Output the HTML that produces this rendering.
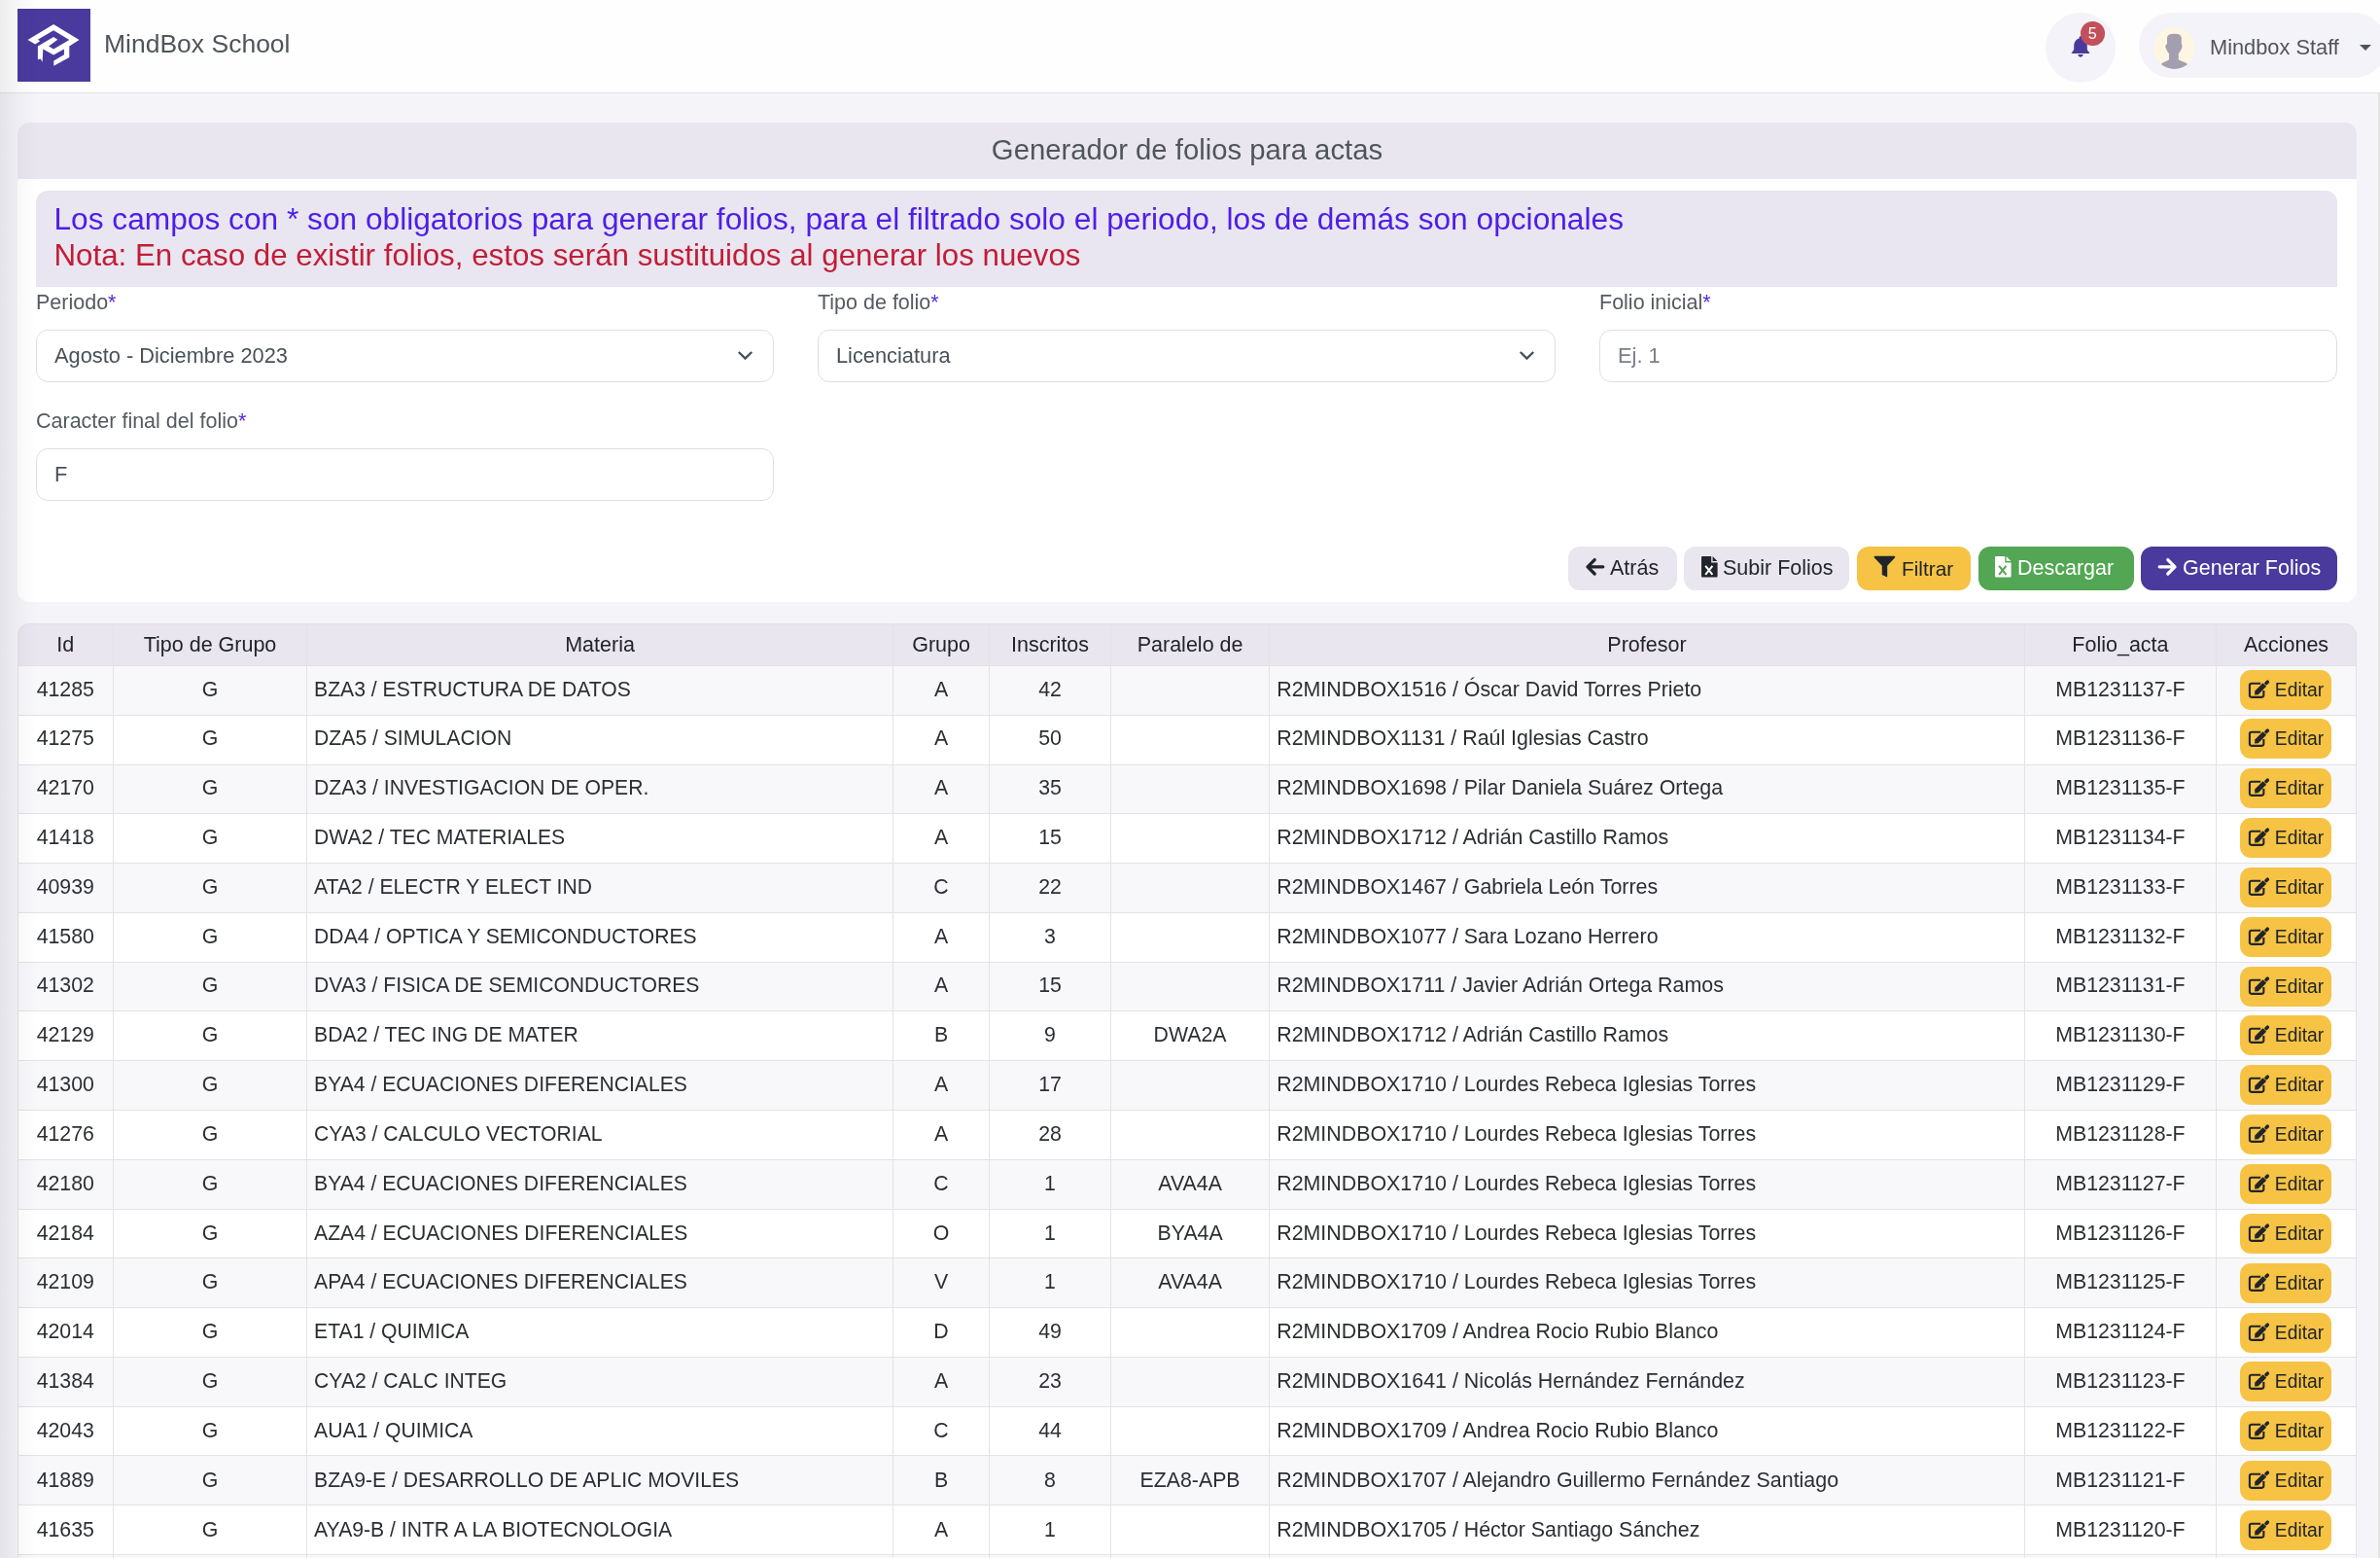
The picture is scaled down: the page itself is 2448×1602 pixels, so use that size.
<!DOCTYPE html>
<html><head><meta charset="utf-8">
<style>
*{box-sizing:border-box;margin:0;padding:0}
html,body{width:2448px;height:1602px;overflow:hidden}
body{will-change:transform;background:#f5f4f9;font-family:"Liberation Sans",sans-serif;color:#212529;position:relative}
.abs{position:absolute}
#hdr{left:0;top:0;width:2448px;height:96px;background:#fefefe;border-bottom:1.7px solid #e2e2e2}
#brand{left:107px;top:27px;font-size:26.5px;color:#50555b;white-space:nowrap;line-height:36px}
#bellc{left:2104px;top:13px;width:72px;height:72px;border-radius:50%;background:#f4f3f9}
#badge{left:2140px;top:22px;width:24.5px;height:24.5px;border-radius:50%;background:#c1505b;color:#fff;font-size:16px;text-align:center;line-height:26px}
#pill{left:2200px;top:13px;width:255px;height:67px;border-radius:34px;background:#f4f3f9}
#uname{left:2273px;top:34px;font-size:21.8px;color:#50555b;white-space:nowrap;line-height:30px}
#card{left:18px;top:126px;width:2406px;height:493px;background:#fff;border-radius:12px;overflow:hidden}
#cardh{left:0;top:0;width:2406px;height:58px;background:#e9e6f0;text-align:center;font-size:29.3px;color:#50555b;line-height:56px}
#alert{left:19px;top:70px;width:2367px;height:99px;background:#e9e6f1;border-radius:12px 12px 0 0}
.al1{position:absolute;left:18.5px;top:9px;font-size:31.68px;color:#4f1ee6;white-space:nowrap;line-height:40px}
.al2{position:absolute;left:18.5px;top:47px;font-size:31.3px;color:#c21d35;white-space:nowrap;line-height:40px}
.lbl{position:absolute;font-size:21.5px;color:#555a61;white-space:nowrap;line-height:28px;margin-top:1px}
.lbl i{font-style:normal;color:#5627e0}
.inp{position:absolute;width:759px;height:54px;border:1.5px solid #dfdfe1;border-radius:12px;background:#fff;font-size:21.8px;color:#495057;line-height:51px;padding-left:18px;white-space:nowrap}
.inp svg{position:absolute;right:20px;top:20px}
.btn{position:absolute;top:562px;height:45px;border-radius:12px;font-size:21.5px;line-height:45px;white-space:nowrap;color:#212529}
.btn span{position:absolute;top:0}
.btn svg{position:absolute;left:0;top:0}
#tw{left:18px;top:641px;width:2406px;height:961px;background:#fff;border-radius:12px 12px 0 0;overflow:hidden}
#tbord{left:18px;top:641px;width:2406px;height:1000px;border:1.5px solid #e3e3e3;border-radius:12px 12px 0 0}
.th{position:absolute;background:#e9e6f0;font-size:21.5px;text-align:center;color:#212529;white-space:nowrap}
.row{position:absolute;left:0px;width:2406px;border-top:1.5px solid #e3e3e3;background:#fff}
.row.odd{background:#f8f8fb}
.td{position:absolute;height:50.8px;font-size:21.3px;line-height:50.8px;white-space:nowrap;color:#2b2e33}
.c{text-align:center}
.vl{position:absolute;width:1.5px;height:1000px;background:#e3e3e3}
.ed{position:absolute;width:94px;height:41px;border-radius:11px;background:#f6c344;font-size:19.3px;color:#212529}
.ed span{position:absolute;left:35.8px;top:1px;line-height:40px}
#lshadow{left:0;top:0;width:40px;height:1602px;background:linear-gradient(to right,rgba(30,30,50,0.075) 0px,rgba(30,30,50,0.03) 18px,rgba(30,30,50,0) 38px)}
#rline{left:2446px;top:96px;width:2px;height:1506px;background:#e6e6e6}
#tblmask{left:18px;top:641px;width:2406px;height:14px}
</style></head><body>
<div id="hdr" class="abs"></div>
<svg class="abs" style="left:18px;top:9px" width="75" height="75" viewBox="18 9 75 75">
<rect x="18" y="9" width="75" height="75" fill="#4a3a9d"/>
<path fill="#fff" d="M55.1,25 L81.5,41 L71.3,47.4 L71.3,58.9 L55.3,67.8 L55.3,62.4 L65.9,56.2 L65.9,50.5 L55.1,56.6 L44.3,50.5 L43.6,63.8 L41.6,60.5 L38.9,61.2 L38.9,47.4 L55.1,37.9 L59.3,40.8 L50.1,47.4 L55.1,50.5 L71.3,41 L55.1,31.2 L38.9,40.8 L41.2,42.2 L36.2,45.6 L28.5,41 Z"/>
</svg>
<div id="brand" class="abs">MindBox School</div>
<div id="bellc" class="abs"></div>
<svg class="abs" style="left:2125px;top:33px" width="30" height="30" viewBox="2125 33 30 30">
<path fill="#4a3a9d" d="M2140,37.2 c-0.9,0 -1.4,0.7 -1.4,1.5 v0.8 c-3.6,0.9 -5.4,4.2 -5.4,8 v2.6 c0,1.8 -1.2,3 -2.3,4 c-0.4,0.4 -0.2,0.8 0.3,0.8 h17.6 c0.5,0 0.7,-0.4 0.3,-0.8 c-1.1,-1 -2.3,-2.2 -2.3,-4 v-2.6 c0,-3.8 -1.8,-7.1 -5.4,-8 v-0.8 c0,-0.8 -0.5,-1.5 -1.4,-1.5z M2137.2,56 h5.6 c-0.6,1.7 -1.6,2.7 -2.8,2.7 c-1.2,0 -2.2,-1 -2.8,-2.7z"/>
</svg>
<div id="badge" class="abs">5</div>
<div id="pill" class="abs"></div>
<svg class="abs" style="left:2215px;top:28px" width="43" height="43" viewBox="0 0 43 43">
<defs><clipPath id="avc"><circle cx="21.5" cy="21.5" r="21.5"/></clipPath></defs>
<circle cx="21.5" cy="21.5" r="21.5" fill="#fdf6e3"/>
<g clip-path="url(#avc)" fill="#a39fb0">
<path d="M14,11.5 c0,-3.5 2.8,-4.7 7.4,-4.7 c4.6,0 7.4,1.2 7.4,4.7 v5.7 c0.9,0.4 1,3.8 0,4.9 c-0.6,1.8 -1.8,3.6 -3,5.2 v6.1 l8.4,3.6 L38,45 H5 L8.6,37 l7.4,-3.6 v-6.1 c-1.2,-1.6 -2.4,-3.4 -3,-5.2 c-1,-1.1 -0.9,-4.5 1,-4.9z"/>
</g>
</svg>
<div id="uname" class="abs">Mindbox Staff</div>
<svg class="abs" style="left:2425px;top:44px" width="16" height="10" viewBox="0 0 16 10"><path d="M2,2 h12 l-6,6z" fill="#50555b"/></svg>

<div id="card" class="abs">
  <div id="cardh" class="abs">Generador de folios para actas</div>
  <div id="alert" class="abs">
    <div class="al1">Los campos con * son obligatorios para generar folios, para el filtrado solo el periodo, los de demás son opcionales</div>
    <div class="al2">Nota: En caso de existir folios, estos serán sustituidos al generar los nuevos</div>
  </div>
</div>

<div class="lbl" style="left:37px;top:296px">Periodo<i>*</i></div>
<div class="lbl" style="left:841px;top:296px">Tipo de folio<i>*</i></div>
<div class="lbl" style="left:1645px;top:296px">Folio inicial<i>*</i></div>
<div class="lbl" style="left:37px;top:418px">Caracter final del folio<i>*</i></div>

<div class="inp" style="left:37px;top:339px">Agosto - Diciembre 2023<svg width="17" height="11" viewBox="0 0 17 11"><path d="M1.8,2 L8.5,8.6 L15.2,2" fill="none" stroke="#495057" stroke-width="2.4"/></svg></div>
<div class="inp" style="left:841px;top:339px">Licenciatura<svg width="17" height="11" viewBox="0 0 17 11"><path d="M1.8,2 L8.5,8.6 L15.2,2" fill="none" stroke="#495057" stroke-width="2.4"/></svg></div>
<div class="inp" style="left:1645px;top:339px;color:#7a7f86">Ej. 1</div>
<div class="inp" style="left:37px;top:461px">F</div>

<!-- buttons -->
<div class="btn" style="left:1613px;width:112px;background:#e9e6f0">
<svg width="112" height="45" viewBox="1613 562 112 45"><path d="M1648.8,582.8 H1634 M1640.2,575.6 L1633,582.8 L1640.2,590" fill="none" stroke="#212529" stroke-width="3.3" stroke-linecap="round" stroke-linejoin="round"/></svg>
<span style="left:43px">Atrás</span></div>
<div class="btn" style="left:1732px;width:170px;background:#e9e6f0">
<svg width="170" height="45" viewBox="1732 562 170 45"><path d="M1751,572.1 H1760.2 V578.6 H1766.6 V592.6 a1,1 0 0 1 -1,1 H1751 a1,1 0 0 1 -1,-1 V573.1 a1,1 0 0 1 1,-1z M1761.6,572.1 L1766.4,577.1 H1761.6z" fill="#212529"/><path d="M1754.2,581.8 L1761.4,590.9 M1761.4,581.8 L1754.2,590.9" stroke="#fff" stroke-width="2"/></svg>
<span style="left:40px">Subir Folios</span></div>
<div class="btn" style="left:1910px;width:117px;background:#f6c344">
<svg width="117" height="45" viewBox="1910 562 117 45"><path d="M1928.6,571.7 H1948.3 a1,1 0 0 1 0.7,1.7 L1941.2,581.8 V593.6 L1935.8,590.9 V581.8 L1927.9,573.4 a1,1 0 0 1 0.7,-1.7z" fill="#212529"/></svg>
<span style="left:46px;font-size:20.8px">Filtrar</span></div>
<div class="btn" style="left:2035px;width:160px;background:#53a653;color:#fff">
<svg width="160" height="45" viewBox="2035 562 160 45"><path d="M2053,572.1 H2062.2 V578.6 H2068.6 V592.6 a1,1 0 0 1 -1,1 H2053 a1,1 0 0 1 -1,-1 V573.1 a1,1 0 0 1 1,-1z M2063.6,572.1 L2068.4,577.1 H2063.6z" fill="#fff"/><path d="M2056.2,581.8 L2063.4,590.9 M2063.4,581.8 L2056.2,590.9" stroke="#53a653" stroke-width="2"/></svg>
<span style="left:40px">Descargar</span></div>
<div class="btn" style="left:2202px;width:202px;background:#4a3a9d;color:#fff">
<svg width="202" height="45" viewBox="2202 562 202 45"><path d="M2221.2,582.8 H2236 M2229.8,575.6 L2237,582.8 L2229.8,590" fill="none" stroke="#fff" stroke-width="3.3" stroke-linecap="round" stroke-linejoin="round"/></svg>
<span style="left:43px">Generar Folios</span></div>

<div id="tw" class="abs">
<div class="th" style="left:0.00px;width:98.50px;top:0px;height:43.00px;line-height:44.00px">Id</div>
<div class="th" style="left:98.50px;width:199.00px;top:0px;height:43.00px;line-height:44.00px">Tipo de Grupo</div>
<div class="th" style="left:297.50px;width:603.10px;top:0px;height:43.00px;line-height:44.00px">Materia</div>
<div class="th" style="left:900.60px;width:98.90px;top:0px;height:43.00px;line-height:44.00px">Grupo</div>
<div class="th" style="left:999.50px;width:125.10px;top:0px;height:43.00px;line-height:44.00px">Inscritos</div>
<div class="th" style="left:1124.60px;width:163.00px;top:0px;height:43.00px;line-height:44.00px">Paralelo de</div>
<div class="th" style="left:1287.60px;width:776.80px;top:0px;height:43.00px;line-height:44.00px">Profesor</div>
<div class="th" style="left:2064.40px;width:197.10px;top:0px;height:43.00px;line-height:44.00px">Folio_acta</div>
<div class="th" style="left:2261.50px;width:144.00px;top:0px;height:43.00px;line-height:44.00px">Acciones</div>
<div class="row odd" style="top:43.00px;height:52.28px"></div>
<div class="td c" style="left:0.00px;width:98.50px;top:42.50px">41285</div>
<div class="td c" style="left:98.50px;width:199.00px;top:42.50px">G</div>
<div class="td" style="left:305.10px;top:42.50px;font-size:21.15px">BZA3 / ESTRUCTURA DE DATOS</div>
<div class="td c" style="left:900.60px;width:98.90px;top:42.50px">A</div>
<div class="td c" style="left:999.50px;width:125.10px;top:42.50px">42</div>
<div class="td c" style="left:1124.60px;width:163.00px;top:42.50px"></div>
<div class="td" style="left:1295.20px;top:42.50px;font-size:21.4px">R2MINDBOX1516 / Óscar David Torres Prieto</div>
<div class="td c" style="left:2064.40px;width:197.10px;top:42.50px">MB1231137-F</div>
<div class="ed" style="left:2286px;top:47.60px"><svg width="94" height="41" viewBox="0 0 94 41" style="position:absolute;left:0;top:0"><path d="M21.2,13.75 H11.9 a2,2 0 0 0 -2,2 V25.85 a2,2 0 0 0 2,2 H22.35 a2,2 0 0 0 2,-2 V21.1" fill="none" stroke="#212529" stroke-width="2.1"/><path d="M15.1,25.4 L15.3,21.6 L23.6,13.3 L27.1,16.8 L18.8,25.2 Z" fill="#212529"/><path d="M27,13.5 L28.3,12.2" stroke="#212529" stroke-width="3.6" stroke-linecap="round"/></svg><span>Editar</span></div>
<div class="row" style="top:93.78px;height:52.28px"></div>
<div class="td c" style="left:0.00px;width:98.50px;top:93.33px">41275</div>
<div class="td c" style="left:98.50px;width:199.00px;top:93.33px">G</div>
<div class="td" style="left:305.10px;top:93.33px;font-size:21.15px">DZA5 / SIMULACION</div>
<div class="td c" style="left:900.60px;width:98.90px;top:93.33px">A</div>
<div class="td c" style="left:999.50px;width:125.10px;top:93.33px">50</div>
<div class="td c" style="left:1124.60px;width:163.00px;top:93.33px"></div>
<div class="td" style="left:1295.20px;top:93.33px;font-size:21.4px">R2MINDBOX1131 / Raúl Iglesias Castro</div>
<div class="td c" style="left:2064.40px;width:197.10px;top:93.33px">MB1231136-F</div>
<div class="ed" style="left:2286px;top:98.44px"><svg width="94" height="41" viewBox="0 0 94 41" style="position:absolute;left:0;top:0"><path d="M21.2,13.75 H11.9 a2,2 0 0 0 -2,2 V25.85 a2,2 0 0 0 2,2 H22.35 a2,2 0 0 0 2,-2 V21.1" fill="none" stroke="#212529" stroke-width="2.1"/><path d="M15.1,25.4 L15.3,21.6 L23.6,13.3 L27.1,16.8 L18.8,25.2 Z" fill="#212529"/><path d="M27,13.5 L28.3,12.2" stroke="#212529" stroke-width="3.6" stroke-linecap="round"/></svg><span>Editar</span></div>
<div class="row odd" style="top:144.56px;height:52.28px"></div>
<div class="td c" style="left:0.00px;width:98.50px;top:144.16px">42170</div>
<div class="td c" style="left:98.50px;width:199.00px;top:144.16px">G</div>
<div class="td" style="left:305.10px;top:144.16px;font-size:21.15px">DZA3 / INVESTIGACION DE OPER.</div>
<div class="td c" style="left:900.60px;width:98.90px;top:144.16px">A</div>
<div class="td c" style="left:999.50px;width:125.10px;top:144.16px">35</div>
<div class="td c" style="left:1124.60px;width:163.00px;top:144.16px"></div>
<div class="td" style="left:1295.20px;top:144.16px;font-size:21.4px">R2MINDBOX1698 / Pilar Daniela Suárez Ortega</div>
<div class="td c" style="left:2064.40px;width:197.10px;top:144.16px">MB1231135-F</div>
<div class="ed" style="left:2286px;top:149.28px"><svg width="94" height="41" viewBox="0 0 94 41" style="position:absolute;left:0;top:0"><path d="M21.2,13.75 H11.9 a2,2 0 0 0 -2,2 V25.85 a2,2 0 0 0 2,2 H22.35 a2,2 0 0 0 2,-2 V21.1" fill="none" stroke="#212529" stroke-width="2.1"/><path d="M15.1,25.4 L15.3,21.6 L23.6,13.3 L27.1,16.8 L18.8,25.2 Z" fill="#212529"/><path d="M27,13.5 L28.3,12.2" stroke="#212529" stroke-width="3.6" stroke-linecap="round"/></svg><span>Editar</span></div>
<div class="row" style="top:195.34px;height:52.28px"></div>
<div class="td c" style="left:0.00px;width:98.50px;top:194.99px">41418</div>
<div class="td c" style="left:98.50px;width:199.00px;top:194.99px">G</div>
<div class="td" style="left:305.10px;top:194.99px;font-size:21.15px">DWA2 / TEC MATERIALES</div>
<div class="td c" style="left:900.60px;width:98.90px;top:194.99px">A</div>
<div class="td c" style="left:999.50px;width:125.10px;top:194.99px">15</div>
<div class="td c" style="left:1124.60px;width:163.00px;top:194.99px"></div>
<div class="td" style="left:1295.20px;top:194.99px;font-size:21.4px">R2MINDBOX1712 / Adrián Castillo Ramos</div>
<div class="td c" style="left:2064.40px;width:197.10px;top:194.99px">MB1231134-F</div>
<div class="ed" style="left:2286px;top:200.12px"><svg width="94" height="41" viewBox="0 0 94 41" style="position:absolute;left:0;top:0"><path d="M21.2,13.75 H11.9 a2,2 0 0 0 -2,2 V25.85 a2,2 0 0 0 2,2 H22.35 a2,2 0 0 0 2,-2 V21.1" fill="none" stroke="#212529" stroke-width="2.1"/><path d="M15.1,25.4 L15.3,21.6 L23.6,13.3 L27.1,16.8 L18.8,25.2 Z" fill="#212529"/><path d="M27,13.5 L28.3,12.2" stroke="#212529" stroke-width="3.6" stroke-linecap="round"/></svg><span>Editar</span></div>
<div class="row odd" style="top:246.12px;height:52.28px"></div>
<div class="td c" style="left:0.00px;width:98.50px;top:245.82px">40939</div>
<div class="td c" style="left:98.50px;width:199.00px;top:245.82px">G</div>
<div class="td" style="left:305.10px;top:245.82px;font-size:21.15px">ATA2 / ELECTR Y ELECT IND</div>
<div class="td c" style="left:900.60px;width:98.90px;top:245.82px">C</div>
<div class="td c" style="left:999.50px;width:125.10px;top:245.82px">22</div>
<div class="td c" style="left:1124.60px;width:163.00px;top:245.82px"></div>
<div class="td" style="left:1295.20px;top:245.82px;font-size:21.4px">R2MINDBOX1467 / Gabriela León Torres</div>
<div class="td c" style="left:2064.40px;width:197.10px;top:245.82px">MB1231133-F</div>
<div class="ed" style="left:2286px;top:250.96px"><svg width="94" height="41" viewBox="0 0 94 41" style="position:absolute;left:0;top:0"><path d="M21.2,13.75 H11.9 a2,2 0 0 0 -2,2 V25.85 a2,2 0 0 0 2,2 H22.35 a2,2 0 0 0 2,-2 V21.1" fill="none" stroke="#212529" stroke-width="2.1"/><path d="M15.1,25.4 L15.3,21.6 L23.6,13.3 L27.1,16.8 L18.8,25.2 Z" fill="#212529"/><path d="M27,13.5 L28.3,12.2" stroke="#212529" stroke-width="3.6" stroke-linecap="round"/></svg><span>Editar</span></div>
<div class="row" style="top:296.90px;height:52.28px"></div>
<div class="td c" style="left:0.00px;width:98.50px;top:296.65px">41580</div>
<div class="td c" style="left:98.50px;width:199.00px;top:296.65px">G</div>
<div class="td" style="left:305.10px;top:296.65px;font-size:21.15px">DDA4 / OPTICA Y SEMICONDUCTORES</div>
<div class="td c" style="left:900.60px;width:98.90px;top:296.65px">A</div>
<div class="td c" style="left:999.50px;width:125.10px;top:296.65px">3</div>
<div class="td c" style="left:1124.60px;width:163.00px;top:296.65px"></div>
<div class="td" style="left:1295.20px;top:296.65px;font-size:21.4px">R2MINDBOX1077 / Sara Lozano Herrero</div>
<div class="td c" style="left:2064.40px;width:197.10px;top:296.65px">MB1231132-F</div>
<div class="ed" style="left:2286px;top:301.80px"><svg width="94" height="41" viewBox="0 0 94 41" style="position:absolute;left:0;top:0"><path d="M21.2,13.75 H11.9 a2,2 0 0 0 -2,2 V25.85 a2,2 0 0 0 2,2 H22.35 a2,2 0 0 0 2,-2 V21.1" fill="none" stroke="#212529" stroke-width="2.1"/><path d="M15.1,25.4 L15.3,21.6 L23.6,13.3 L27.1,16.8 L18.8,25.2 Z" fill="#212529"/><path d="M27,13.5 L28.3,12.2" stroke="#212529" stroke-width="3.6" stroke-linecap="round"/></svg><span>Editar</span></div>
<div class="row odd" style="top:347.68px;height:52.28px"></div>
<div class="td c" style="left:0.00px;width:98.50px;top:347.48px">41302</div>
<div class="td c" style="left:98.50px;width:199.00px;top:347.48px">G</div>
<div class="td" style="left:305.10px;top:347.48px;font-size:21.15px">DVA3 / FISICA DE SEMICONDUCTORES</div>
<div class="td c" style="left:900.60px;width:98.90px;top:347.48px">A</div>
<div class="td c" style="left:999.50px;width:125.10px;top:347.48px">15</div>
<div class="td c" style="left:1124.60px;width:163.00px;top:347.48px"></div>
<div class="td" style="left:1295.20px;top:347.48px;font-size:21.4px">R2MINDBOX1711 / Javier Adrián Ortega Ramos</div>
<div class="td c" style="left:2064.40px;width:197.10px;top:347.48px">MB1231131-F</div>
<div class="ed" style="left:2286px;top:352.64px"><svg width="94" height="41" viewBox="0 0 94 41" style="position:absolute;left:0;top:0"><path d="M21.2,13.75 H11.9 a2,2 0 0 0 -2,2 V25.85 a2,2 0 0 0 2,2 H22.35 a2,2 0 0 0 2,-2 V21.1" fill="none" stroke="#212529" stroke-width="2.1"/><path d="M15.1,25.4 L15.3,21.6 L23.6,13.3 L27.1,16.8 L18.8,25.2 Z" fill="#212529"/><path d="M27,13.5 L28.3,12.2" stroke="#212529" stroke-width="3.6" stroke-linecap="round"/></svg><span>Editar</span></div>
<div class="row" style="top:398.46px;height:52.28px"></div>
<div class="td c" style="left:0.00px;width:98.50px;top:398.31px">42129</div>
<div class="td c" style="left:98.50px;width:199.00px;top:398.31px">G</div>
<div class="td" style="left:305.10px;top:398.31px;font-size:21.15px">BDA2 / TEC ING DE MATER</div>
<div class="td c" style="left:900.60px;width:98.90px;top:398.31px">B</div>
<div class="td c" style="left:999.50px;width:125.10px;top:398.31px">9</div>
<div class="td c" style="left:1124.60px;width:163.00px;top:398.31px">DWA2A</div>
<div class="td" style="left:1295.20px;top:398.31px;font-size:21.4px">R2MINDBOX1712 / Adrián Castillo Ramos</div>
<div class="td c" style="left:2064.40px;width:197.10px;top:398.31px">MB1231130-F</div>
<div class="ed" style="left:2286px;top:403.48px"><svg width="94" height="41" viewBox="0 0 94 41" style="position:absolute;left:0;top:0"><path d="M21.2,13.75 H11.9 a2,2 0 0 0 -2,2 V25.85 a2,2 0 0 0 2,2 H22.35 a2,2 0 0 0 2,-2 V21.1" fill="none" stroke="#212529" stroke-width="2.1"/><path d="M15.1,25.4 L15.3,21.6 L23.6,13.3 L27.1,16.8 L18.8,25.2 Z" fill="#212529"/><path d="M27,13.5 L28.3,12.2" stroke="#212529" stroke-width="3.6" stroke-linecap="round"/></svg><span>Editar</span></div>
<div class="row odd" style="top:449.24px;height:52.28px"></div>
<div class="td c" style="left:0.00px;width:98.50px;top:449.14px">41300</div>
<div class="td c" style="left:98.50px;width:199.00px;top:449.14px">G</div>
<div class="td" style="left:305.10px;top:449.14px;font-size:21.15px">BYA4 / ECUACIONES DIFERENCIALES</div>
<div class="td c" style="left:900.60px;width:98.90px;top:449.14px">A</div>
<div class="td c" style="left:999.50px;width:125.10px;top:449.14px">17</div>
<div class="td c" style="left:1124.60px;width:163.00px;top:449.14px"></div>
<div class="td" style="left:1295.20px;top:449.14px;font-size:21.4px">R2MINDBOX1710 / Lourdes Rebeca Iglesias Torres</div>
<div class="td c" style="left:2064.40px;width:197.10px;top:449.14px">MB1231129-F</div>
<div class="ed" style="left:2286px;top:454.32px"><svg width="94" height="41" viewBox="0 0 94 41" style="position:absolute;left:0;top:0"><path d="M21.2,13.75 H11.9 a2,2 0 0 0 -2,2 V25.85 a2,2 0 0 0 2,2 H22.35 a2,2 0 0 0 2,-2 V21.1" fill="none" stroke="#212529" stroke-width="2.1"/><path d="M15.1,25.4 L15.3,21.6 L23.6,13.3 L27.1,16.8 L18.8,25.2 Z" fill="#212529"/><path d="M27,13.5 L28.3,12.2" stroke="#212529" stroke-width="3.6" stroke-linecap="round"/></svg><span>Editar</span></div>
<div class="row" style="top:500.02px;height:52.28px"></div>
<div class="td c" style="left:0.00px;width:98.50px;top:499.97px">41276</div>
<div class="td c" style="left:98.50px;width:199.00px;top:499.97px">G</div>
<div class="td" style="left:305.10px;top:499.97px;font-size:21.15px">CYA3 / CALCULO VECTORIAL</div>
<div class="td c" style="left:900.60px;width:98.90px;top:499.97px">A</div>
<div class="td c" style="left:999.50px;width:125.10px;top:499.97px">28</div>
<div class="td c" style="left:1124.60px;width:163.00px;top:499.97px"></div>
<div class="td" style="left:1295.20px;top:499.97px;font-size:21.4px">R2MINDBOX1710 / Lourdes Rebeca Iglesias Torres</div>
<div class="td c" style="left:2064.40px;width:197.10px;top:499.97px">MB1231128-F</div>
<div class="ed" style="left:2286px;top:505.16px"><svg width="94" height="41" viewBox="0 0 94 41" style="position:absolute;left:0;top:0"><path d="M21.2,13.75 H11.9 a2,2 0 0 0 -2,2 V25.85 a2,2 0 0 0 2,2 H22.35 a2,2 0 0 0 2,-2 V21.1" fill="none" stroke="#212529" stroke-width="2.1"/><path d="M15.1,25.4 L15.3,21.6 L23.6,13.3 L27.1,16.8 L18.8,25.2 Z" fill="#212529"/><path d="M27,13.5 L28.3,12.2" stroke="#212529" stroke-width="3.6" stroke-linecap="round"/></svg><span>Editar</span></div>
<div class="row odd" style="top:550.80px;height:52.28px"></div>
<div class="td c" style="left:0.00px;width:98.50px;top:550.80px">42180</div>
<div class="td c" style="left:98.50px;width:199.00px;top:550.80px">G</div>
<div class="td" style="left:305.10px;top:550.80px;font-size:21.15px">BYA4 / ECUACIONES DIFERENCIALES</div>
<div class="td c" style="left:900.60px;width:98.90px;top:550.80px">C</div>
<div class="td c" style="left:999.50px;width:125.10px;top:550.80px">1</div>
<div class="td c" style="left:1124.60px;width:163.00px;top:550.80px">AVA4A</div>
<div class="td" style="left:1295.20px;top:550.80px;font-size:21.4px">R2MINDBOX1710 / Lourdes Rebeca Iglesias Torres</div>
<div class="td c" style="left:2064.40px;width:197.10px;top:550.80px">MB1231127-F</div>
<div class="ed" style="left:2286px;top:556.00px"><svg width="94" height="41" viewBox="0 0 94 41" style="position:absolute;left:0;top:0"><path d="M21.2,13.75 H11.9 a2,2 0 0 0 -2,2 V25.85 a2,2 0 0 0 2,2 H22.35 a2,2 0 0 0 2,-2 V21.1" fill="none" stroke="#212529" stroke-width="2.1"/><path d="M15.1,25.4 L15.3,21.6 L23.6,13.3 L27.1,16.8 L18.8,25.2 Z" fill="#212529"/><path d="M27,13.5 L28.3,12.2" stroke="#212529" stroke-width="3.6" stroke-linecap="round"/></svg><span>Editar</span></div>
<div class="row" style="top:601.58px;height:52.28px"></div>
<div class="td c" style="left:0.00px;width:98.50px;top:601.63px">42184</div>
<div class="td c" style="left:98.50px;width:199.00px;top:601.63px">G</div>
<div class="td" style="left:305.10px;top:601.63px;font-size:21.15px">AZA4 / ECUACIONES DIFERENCIALES</div>
<div class="td c" style="left:900.60px;width:98.90px;top:601.63px">O</div>
<div class="td c" style="left:999.50px;width:125.10px;top:601.63px">1</div>
<div class="td c" style="left:1124.60px;width:163.00px;top:601.63px">BYA4A</div>
<div class="td" style="left:1295.20px;top:601.63px;font-size:21.4px">R2MINDBOX1710 / Lourdes Rebeca Iglesias Torres</div>
<div class="td c" style="left:2064.40px;width:197.10px;top:601.63px">MB1231126-F</div>
<div class="ed" style="left:2286px;top:606.84px"><svg width="94" height="41" viewBox="0 0 94 41" style="position:absolute;left:0;top:0"><path d="M21.2,13.75 H11.9 a2,2 0 0 0 -2,2 V25.85 a2,2 0 0 0 2,2 H22.35 a2,2 0 0 0 2,-2 V21.1" fill="none" stroke="#212529" stroke-width="2.1"/><path d="M15.1,25.4 L15.3,21.6 L23.6,13.3 L27.1,16.8 L18.8,25.2 Z" fill="#212529"/><path d="M27,13.5 L28.3,12.2" stroke="#212529" stroke-width="3.6" stroke-linecap="round"/></svg><span>Editar</span></div>
<div class="row odd" style="top:652.36px;height:52.28px"></div>
<div class="td c" style="left:0.00px;width:98.50px;top:652.46px">42109</div>
<div class="td c" style="left:98.50px;width:199.00px;top:652.46px">G</div>
<div class="td" style="left:305.10px;top:652.46px;font-size:21.15px">APA4 / ECUACIONES DIFERENCIALES</div>
<div class="td c" style="left:900.60px;width:98.90px;top:652.46px">V</div>
<div class="td c" style="left:999.50px;width:125.10px;top:652.46px">1</div>
<div class="td c" style="left:1124.60px;width:163.00px;top:652.46px">AVA4A</div>
<div class="td" style="left:1295.20px;top:652.46px;font-size:21.4px">R2MINDBOX1710 / Lourdes Rebeca Iglesias Torres</div>
<div class="td c" style="left:2064.40px;width:197.10px;top:652.46px">MB1231125-F</div>
<div class="ed" style="left:2286px;top:657.68px"><svg width="94" height="41" viewBox="0 0 94 41" style="position:absolute;left:0;top:0"><path d="M21.2,13.75 H11.9 a2,2 0 0 0 -2,2 V25.85 a2,2 0 0 0 2,2 H22.35 a2,2 0 0 0 2,-2 V21.1" fill="none" stroke="#212529" stroke-width="2.1"/><path d="M15.1,25.4 L15.3,21.6 L23.6,13.3 L27.1,16.8 L18.8,25.2 Z" fill="#212529"/><path d="M27,13.5 L28.3,12.2" stroke="#212529" stroke-width="3.6" stroke-linecap="round"/></svg><span>Editar</span></div>
<div class="row" style="top:703.14px;height:52.28px"></div>
<div class="td c" style="left:0.00px;width:98.50px;top:703.29px">42014</div>
<div class="td c" style="left:98.50px;width:199.00px;top:703.29px">G</div>
<div class="td" style="left:305.10px;top:703.29px;font-size:21.15px">ETA1 / QUIMICA</div>
<div class="td c" style="left:900.60px;width:98.90px;top:703.29px">D</div>
<div class="td c" style="left:999.50px;width:125.10px;top:703.29px">49</div>
<div class="td c" style="left:1124.60px;width:163.00px;top:703.29px"></div>
<div class="td" style="left:1295.20px;top:703.29px;font-size:21.4px">R2MINDBOX1709 / Andrea Rocio Rubio Blanco</div>
<div class="td c" style="left:2064.40px;width:197.10px;top:703.29px">MB1231124-F</div>
<div class="ed" style="left:2286px;top:708.52px"><svg width="94" height="41" viewBox="0 0 94 41" style="position:absolute;left:0;top:0"><path d="M21.2,13.75 H11.9 a2,2 0 0 0 -2,2 V25.85 a2,2 0 0 0 2,2 H22.35 a2,2 0 0 0 2,-2 V21.1" fill="none" stroke="#212529" stroke-width="2.1"/><path d="M15.1,25.4 L15.3,21.6 L23.6,13.3 L27.1,16.8 L18.8,25.2 Z" fill="#212529"/><path d="M27,13.5 L28.3,12.2" stroke="#212529" stroke-width="3.6" stroke-linecap="round"/></svg><span>Editar</span></div>
<div class="row odd" style="top:753.92px;height:52.28px"></div>
<div class="td c" style="left:0.00px;width:98.50px;top:754.12px">41384</div>
<div class="td c" style="left:98.50px;width:199.00px;top:754.12px">G</div>
<div class="td" style="left:305.10px;top:754.12px;font-size:21.15px">CYA2 / CALC INTEG</div>
<div class="td c" style="left:900.60px;width:98.90px;top:754.12px">A</div>
<div class="td c" style="left:999.50px;width:125.10px;top:754.12px">23</div>
<div class="td c" style="left:1124.60px;width:163.00px;top:754.12px"></div>
<div class="td" style="left:1295.20px;top:754.12px;font-size:21.4px">R2MINDBOX1641 / Nicolás Hernández Fernández</div>
<div class="td c" style="left:2064.40px;width:197.10px;top:754.12px">MB1231123-F</div>
<div class="ed" style="left:2286px;top:759.36px"><svg width="94" height="41" viewBox="0 0 94 41" style="position:absolute;left:0;top:0"><path d="M21.2,13.75 H11.9 a2,2 0 0 0 -2,2 V25.85 a2,2 0 0 0 2,2 H22.35 a2,2 0 0 0 2,-2 V21.1" fill="none" stroke="#212529" stroke-width="2.1"/><path d="M15.1,25.4 L15.3,21.6 L23.6,13.3 L27.1,16.8 L18.8,25.2 Z" fill="#212529"/><path d="M27,13.5 L28.3,12.2" stroke="#212529" stroke-width="3.6" stroke-linecap="round"/></svg><span>Editar</span></div>
<div class="row" style="top:804.70px;height:52.28px"></div>
<div class="td c" style="left:0.00px;width:98.50px;top:804.95px">42043</div>
<div class="td c" style="left:98.50px;width:199.00px;top:804.95px">G</div>
<div class="td" style="left:305.10px;top:804.95px;font-size:21.15px">AUA1 / QUIMICA</div>
<div class="td c" style="left:900.60px;width:98.90px;top:804.95px">C</div>
<div class="td c" style="left:999.50px;width:125.10px;top:804.95px">44</div>
<div class="td c" style="left:1124.60px;width:163.00px;top:804.95px"></div>
<div class="td" style="left:1295.20px;top:804.95px;font-size:21.4px">R2MINDBOX1709 / Andrea Rocio Rubio Blanco</div>
<div class="td c" style="left:2064.40px;width:197.10px;top:804.95px">MB1231122-F</div>
<div class="ed" style="left:2286px;top:810.20px"><svg width="94" height="41" viewBox="0 0 94 41" style="position:absolute;left:0;top:0"><path d="M21.2,13.75 H11.9 a2,2 0 0 0 -2,2 V25.85 a2,2 0 0 0 2,2 H22.35 a2,2 0 0 0 2,-2 V21.1" fill="none" stroke="#212529" stroke-width="2.1"/><path d="M15.1,25.4 L15.3,21.6 L23.6,13.3 L27.1,16.8 L18.8,25.2 Z" fill="#212529"/><path d="M27,13.5 L28.3,12.2" stroke="#212529" stroke-width="3.6" stroke-linecap="round"/></svg><span>Editar</span></div>
<div class="row odd" style="top:855.48px;height:52.28px"></div>
<div class="td c" style="left:0.00px;width:98.50px;top:855.78px">41889</div>
<div class="td c" style="left:98.50px;width:199.00px;top:855.78px">G</div>
<div class="td" style="left:305.10px;top:855.78px;font-size:21.15px">BZA9-E / DESARROLLO DE APLIC MOVILES</div>
<div class="td c" style="left:900.60px;width:98.90px;top:855.78px">B</div>
<div class="td c" style="left:999.50px;width:125.10px;top:855.78px">8</div>
<div class="td c" style="left:1124.60px;width:163.00px;top:855.78px">EZA8-APB</div>
<div class="td" style="left:1295.20px;top:855.78px;font-size:21.4px">R2MINDBOX1707 / Alejandro Guillermo Fernández Santiago</div>
<div class="td c" style="left:2064.40px;width:197.10px;top:855.78px">MB1231121-F</div>
<div class="ed" style="left:2286px;top:861.04px"><svg width="94" height="41" viewBox="0 0 94 41" style="position:absolute;left:0;top:0"><path d="M21.2,13.75 H11.9 a2,2 0 0 0 -2,2 V25.85 a2,2 0 0 0 2,2 H22.35 a2,2 0 0 0 2,-2 V21.1" fill="none" stroke="#212529" stroke-width="2.1"/><path d="M15.1,25.4 L15.3,21.6 L23.6,13.3 L27.1,16.8 L18.8,25.2 Z" fill="#212529"/><path d="M27,13.5 L28.3,12.2" stroke="#212529" stroke-width="3.6" stroke-linecap="round"/></svg><span>Editar</span></div>
<div class="row" style="top:906.26px;height:52.28px"></div>
<div class="td c" style="left:0.00px;width:98.50px;top:906.61px">41635</div>
<div class="td c" style="left:98.50px;width:199.00px;top:906.61px">G</div>
<div class="td" style="left:305.10px;top:906.61px;font-size:21.15px">AYA9-B / INTR A LA BIOTECNOLOGIA</div>
<div class="td c" style="left:900.60px;width:98.90px;top:906.61px">A</div>
<div class="td c" style="left:999.50px;width:125.10px;top:906.61px">1</div>
<div class="td c" style="left:1124.60px;width:163.00px;top:906.61px"></div>
<div class="td" style="left:1295.20px;top:906.61px;font-size:21.4px">R2MINDBOX1705 / Héctor Santiago Sánchez</div>
<div class="td c" style="left:2064.40px;width:197.10px;top:906.61px">MB1231120-F</div>
<div class="ed" style="left:2286px;top:911.88px"><svg width="94" height="41" viewBox="0 0 94 41" style="position:absolute;left:0;top:0"><path d="M21.2,13.75 H11.9 a2,2 0 0 0 -2,2 V25.85 a2,2 0 0 0 2,2 H22.35 a2,2 0 0 0 2,-2 V21.1" fill="none" stroke="#212529" stroke-width="2.1"/><path d="M15.1,25.4 L15.3,21.6 L23.6,13.3 L27.1,16.8 L18.8,25.2 Z" fill="#212529"/><path d="M27,13.5 L28.3,12.2" stroke="#212529" stroke-width="3.6" stroke-linecap="round"/></svg><span>Editar</span></div>
<div class="row odd" style="top:957.04px;height:52.28px"></div>
<div class="vl" style="left:97.75px;top:0px"></div>
<div class="vl" style="left:296.75px;top:0px"></div>
<div class="vl" style="left:899.85px;top:0px"></div>
<div class="vl" style="left:998.75px;top:0px"></div>
<div class="vl" style="left:1123.85px;top:0px"></div>
<div class="vl" style="left:1286.85px;top:0px"></div>
<div class="vl" style="left:2063.65px;top:0px"></div>
<div class="vl" style="left:2260.75px;top:0px"></div>
</div><div id="tbord" class="abs"></div>
<div id="lshadow" class="abs"></div>
<div id="rline" class="abs"></div>
</body></html>
